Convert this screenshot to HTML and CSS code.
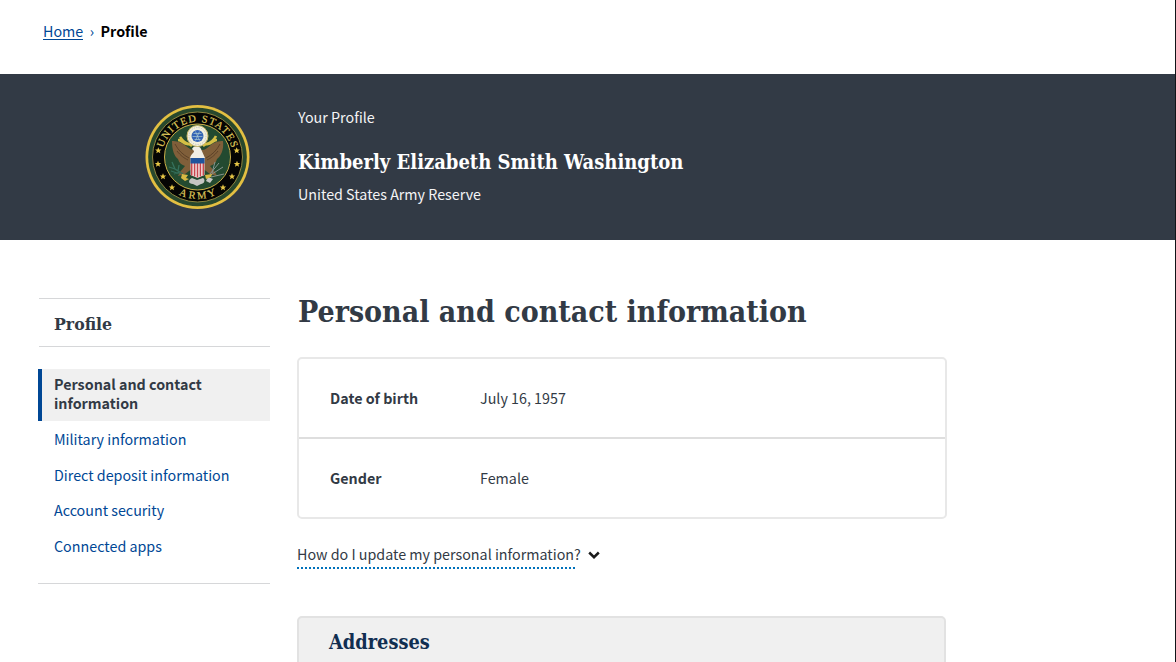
FILE: index.html
```
<!DOCTYPE html>
<html lang="en">
<head>
<meta charset="utf-8">
<title>Profile</title>
<link rel="stylesheet" href="styles.css">
</head>
<body>
<div class="page">
  <nav class="crumbs"><a class="crumb-link" href="#">Home</a><span class="crumb-sep">›</span><b class="crumb-now">Profile</b></nav>
  <header class="banner">
    <svg class="seal" viewBox="0 0 105 105">
      <defs>
        <path id="arc-top" d="M17 52.500a35.500 35.500 0 0 1 71 0"/>
        <path id="arc-bottom" d="M10.500 52a42 42 0 0 0 84 0"/>
        <path id="star" d="M0-3.300.9-1 3.200-.9 1.400.5 2 2.800 0 1.500-2 2.800-1.400.5-3.200-.9-.9-1z"/>
      </defs>
      <circle cx="52.500" cy="52" r="52" fill="#e3bf42"/>
      <circle cx="52.500" cy="52" r="49.300" fill="#28482d"/>
      <circle cx="52.500" cy="52" r="45" fill="#050504" stroke="#8f8540" stroke-width="1"/>
      <circle cx="52.500" cy="52" r="33" fill="#234a30" stroke="#cbb04a" stroke-width="1"/>
      <text class="seal-text"><textPath href="#arc-top" startOffset="50%" text-anchor="middle" textLength="92">UNITED STATES</textPath></text>
      <text class="seal-text"><textPath href="#arc-bottom" startOffset="50%" text-anchor="middle" textLength="39">ARMY</textPath></text>
      <g fill="#e6c645">
        <use href="#star" x="13.300" y="45.500"/><use href="#star" x="13" y="59"/><use href="#star" x="18" y="71.500"/><use href="#star" x="27" y="82.500"/>
        <use href="#star" x="91.700" y="45.500"/><use href="#star" x="92" y="59"/><use href="#star" x="87" y="71.500"/><use href="#star" x="78" y="82.500"/>
      </g>
      <path d="M49 45C43 45 38 35 27 36c0 9 2 15 6 18 1 4 4 6 7 7l-5 6-2 4 7-2 8-6h9l8 6 7 2-2-4-5-6c3-1 6-3 7-7 4-3 7-9 6-18-11-1-15 9-21 9z" fill="#805f3a"/>
      <path d="M30 39c3 6 8 11 14 14M32 46c4 5 7 7 11 9M75 39c-3 6-8 11-14 14M73 46c-4 5-7 7-11 9" stroke="#5d4228" fill="none"/>
      <path d="M33 35c5 0 5 5 11 4M35 32c2 3 4 6 9 7l3 2M72 35c-5 0-5 5-11 4M71 31c-2 4-5 7-10 8l-3 2" stroke="#d5bf45" stroke-width="2.600" fill="none"/>
      <path d="M45 53c1-4 4-5 4-7l-2-2c2-4 8-3 9 0l4 9z" fill="#f1eee5"/>
      <circle cx="52.500" cy="31" r="10.500" fill="#f4f1dd" stroke="#c9b76a" stroke-width="1"/>
      <circle cx="52.500" cy="31" r="8.500" fill="none" stroke="#c2c4c4" stroke-width="1" stroke-dasharray="1.200 1.200"/>
      <circle cx="52.500" cy="31" r="6" fill="#3565b5"/>
      <path d="M48.500 28.500h8M47.500 31.500h10M49.500 34.500h6M50.500 26.500l4 9M54.500 26.500l-4 9" stroke="#a9c9d0" stroke-width=".7"/>
      <path d="M45.500 53h14v17l-7 3-7-3z" fill="#f4e7e6"/>
      <path d="M46.700 58v12.500M49.600 58v13.500M52.500 58v14.500M55.400 58v13.500M58.300 58v12.500" stroke="#c9474d" stroke-width="1.500"/>
      <path d="M45.500 53h14v5.500h-14z" fill="#20549c"/>
      <path d="M27 57l3 7 8 5M24 62l6 2M29 69l6-2M34 60l-1 6M26 66l9 3" stroke="#35705c" stroke-width="1.300" fill="none"/>
      <path d="M64 71l14-9M65 69l9-11M66 72l13-3M67 68l3-11" stroke="#85938e" stroke-width="1" fill="none"/>
      <path d="M47 73l5 2 6-2c3 2 1 6-2 6l-4 2-4-2c-5 0-5-4-1-6zM63 72l5 2-3 4-4-2z" fill="#c6c6c3"/>
      <path d="M37 69l6 1-2 3 3 1-4 2-4-3zM60 70l7-1-1 3-5 2z" fill="#d8b943"/>
    </svg>
    <div class="who">
      <p>Your Profile</p>
      <p class="who-name">Kimberly Elizabeth Smith Washington</p>
      <p>United States Army Reserve</p>
    </div>
  </header>
  <div class="columns">
    <aside class="side">
      <h2 class="side-title">Profile</h2>
      <ul class="side-list">
        <li class="side-item side-current">Personal and contact<br>information</li>
        <li class="side-item">Military information</li>
        <li class="side-item">Direct deposit information</li>
        <li class="side-item">Account security</li>
        <li class="side-item">Connected apps</li>
      </ul>
    </aside>
    <main class="main">
      <h1 class="title">Personal and contact information</h1>
      <dl class="facts">
        <div class="fact"><dt class="fact-key">Date of birth</dt><dd>July 16, 1957</dd></div>
        <div class="fact"><dt class="fact-key">Gender</dt><dd>Female</dd></div>
      </dl>
      <div class="help">
        <div class="help-text">How do I update my personal information?</div>
        <svg class="chevron" viewBox="0 0 12 8"><path d="M1.200 1.500 6 6.200l4.800-4.700" fill="none" stroke="#1b1b1b" stroke-width="2.500"/></svg>
      </div>
      <section class="addresses"><h2 class="addresses-title">Addresses</h2></section>
    </main>
  </div>
</div>
</body>
</html>
```
FILE: styles.css
```
* { box-sizing: border-box; margin: 0; padding: 0; }
body {
  background: #fff;
  color: #323a45;
  font: 14.3px/20px "Noto Sans CJK SC", "Noto Sans", sans-serif;
}
.page {
  width: 1176px;
  height: 662px;
  overflow: hidden;
  border-right: 1px solid #111418;
}
.crumbs { display: flex; height: 74px; padding: 21px 0 0 43px; }
.crumb-link { height: 19px; color: #004795; text-decoration: none; border-bottom: 1px solid #004795; }
.crumb-sep { margin: 0 6.500px 0 6.500px; color: #004795; }
.crumb-now { color: #000; }
.banner { display: flex; gap: 48px; height: 166px; padding: 31px 0 0 145px; background: #323a45; color: #f4f4f5; }
.seal { width: 105px; height: 105px; }
.seal-text { font: 10.500px "Liberation Serif", serif; fill: #dfc65a; stroke: #dfc65a; stroke-width: .2px; }
.who { padding-top: 2px; }
.who-name { margin: 21px 0 8px; font: bold 20px/28px "DejaVu Serif Condensed", "DejaVu Serif", serif; color: #fff; }
.columns { display: flex; gap: 27px; padding: 58px 0 0 38px; }
.side { width: 232px; height: 286px; border-bottom: 1px solid #d6d7d9; }
.side-title { height: 49px; margin-left: 1px; padding: 11px 0 0 15px; border: solid #d6d7d9; border-width: 1px 0; font: bold 17.500px/28px "DejaVu Serif Condensed", "DejaVu Serif", serif; }
.side-list { margin-top: 22px; list-style: none; }
.side-item { height: 35.600px; padding: 8px 0 0 16px; color: #004795; }
.side-current { height: 52px; padding: 5px 0 0 12px; border-left: 4px solid #004795; background: #f0f0f0; color: #323a45; font-weight: bold; line-height: 19px; }
.main { width: 650px; }
.title { height: 59px; padding-left: 1px; font: bold 30px/28px "DejaVu Serif Condensed", "DejaVu Serif", serif; }
.facts { width: 650px; height: 162px; border: 2px solid #e8e8e8; border-radius: 5px; }
.fact { display: flex; height: 78px; padding: 29px 0 0 31px; }
.fact + .fact { height: 80px; border-top: 2px solid #dedede; }
.fact-key { width: 150px; font-weight: bold; }
.help { display: flex; gap: 13px; height: 97px; padding-top: 25px; }
.help-text { width: 278px; height: 25px; border-bottom: 2px dotted #0071bb; white-space: nowrap; }
.chevron { width: 12px; height: 8px; margin-top: 7px; }
.addresses { width: 649px; height: 80px; padding: 10px 30px; border: 2px solid #e2e2e2; border-radius: 5px; background: #f0f0f0; }
.addresses-title { font: bold 19.800px/28px "DejaVu Serif Condensed", "DejaVu Serif", serif; color: #112e51; }
```
